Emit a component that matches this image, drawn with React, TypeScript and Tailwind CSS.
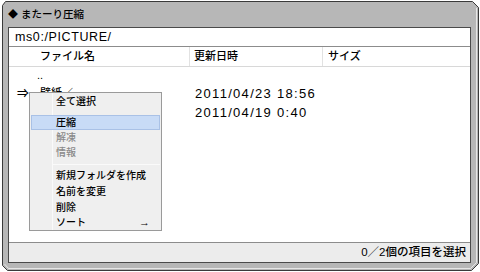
import React from "react";

const jp = "font-['Liberation_Sans','Noto_Sans_CJK_JP',sans-serif]";

function MenuItem({
  label,
  disabled,
  active,
  h,
  arrow,
}: {
  label: string;
  disabled?: boolean;
  active?: boolean;
  h: string;
  arrow?: boolean;
}) {
  return (
    <div
      className={`relative flex items-center ${h} ${
        active ? "bg-[#c8dbf6] border border-[#a9c1e6] mx-[1px]" : ""
      }`}
    >
      <span
        className={`${active ? "pl-[24px]" : "pl-[26px]"} text-[10px] leading-none font-medium ${
          disabled ? "text-[#8a8a8a]" : "text-black"
        }`}
      >
        {label}
      </span>
      {arrow && (
        <span className="absolute left-[109px] text-[11px] leading-none font-bold text-black">→</span>
      )}
    </div>
  );
}

export default function App() {
  return (
    <div className={`relative w-[480px] h-[272px] bg-white overflow-hidden ${jp}`}>
      <svg className="absolute inset-0" width="480" height="272" viewBox="0 0 480 272">
        <polygon
          points="5.5,1.5 472.5,1.5 478.5,7.5 478.5,263.5 471.5,270.5 7.5,270.5 2.5,265.5 2.5,5.5"
          fill="#b7b7b7"
          stroke="#3a3a3a"
          strokeWidth="1"
        />
        <polyline
          points="4.5,264 8.5,268.5 470.5,268.5 476.5,262.5 476.5,8"
          fill="none"
          stroke="#e6e6e6"
          strokeWidth="1"
        />
      </svg>

      <div className="relative flex flex-col h-full">
        {/* title bar */}
        <div className="h-[27px] flex items-center pl-[8px] pt-[2px]">
          <span className="text-[10px] leading-none text-black">◆</span>
          <span className="ml-[3px] text-[10.5px] leading-none font-medium text-black">またーり圧縮</span>
        </div>

        {/* panel */}
        <div className="ml-[8px] mr-[9px] h-[236px] flex flex-col border border-[#4a4a4a] bg-white">
          {/* path bar */}
          <div className="h-[19px] flex items-center pl-[6px] border-b border-[#8c8c8c]">
            <span className="text-[12.5px] leading-none tracking-[0.6px] text-black">ms0:/PICTURE/</span>
          </div>

          {/* header */}
          <div className="h-[20px] flex border-b border-[#d8d8d8] text-[11px] leading-none font-medium text-black">
            <div className="w-[181px] flex items-center pl-[31px] border-r border-[#e2e2e2]">ファイル名</div>
            <div className="w-[133px] flex items-center pl-[4px] border-r border-[#e2e2e2]">更新日時</div>
            <div className="flex-1 flex items-center pl-[5px]">サイズ</div>
          </div>

          {/* list */}
          <div className="flex-1 flex flex-col text-black">
            <div className="h-[17px] flex">
              <div className="w-[181px] flex items-center pl-[28px] text-[11px] leading-none">..</div>
            </div>
            <div className="h-[19px] flex">
              <div className="w-[181px] flex items-center pl-[8px] text-[11px] leading-none font-medium">
                <span className="w-[23px] text-[12px]">⇒</span>
                <span>壁紙／</span>
              </div>
              <div className="w-[133px] flex items-center pl-[5px] text-[13px] leading-none tracking-[1.3px]">
                2011/04/23 18:56
              </div>
            </div>
            <div className="h-[19px] flex">
              <div className="w-[181px] flex items-center pl-[31px] text-[11px] leading-none font-medium">写真／</div>
              <div className="w-[133px] flex items-center pl-[5px] text-[13px] leading-none tracking-[1.3px]">
                2011/04/19 0:40
              </div>
            </div>
          </div>

          {/* status bar */}
          <div className="h-[20px] flex items-center justify-end pr-[4px] border-t border-[#8c8c8c] bg-[#ececec]">
            <span className="text-[11.5px] leading-none font-medium text-black">0／2個の項目を選択</span>
          </div>
        </div>
      </div>

      {/* context menu */}
      <div className="absolute left-[29px] top-[92px] w-[133px] h-[139px] bg-[#efefef] border border-[#9a9a9a] pt-[1px] flex flex-col">
        <div className="absolute left-[22px] top-0 bottom-0 w-px bg-[#fafafa]" />
        <MenuItem label="全て選択" h="h-[15px]" />
        <div className="h-[6px]" />
        <MenuItem label="圧縮" h="h-[15px]" active />
        <MenuItem label="解凍" h="h-[15px]" disabled />
        <MenuItem label="情報" h="h-[16px]" disabled />
        <div className="h-[7px] flex items-center">
          <div className="ml-[22px] mr-[1px] flex-1 h-px bg-[#fafafa]" />
        </div>
        <MenuItem label="新規フォルダを作成" h="h-[16px]" />
        <MenuItem label="名前を変更" h="h-[16px]" />
        <MenuItem label="削除" h="h-[15px]" />
        <MenuItem label="ソート" h="h-[15px]" arrow />
      </div>
    </div>
  );
}
